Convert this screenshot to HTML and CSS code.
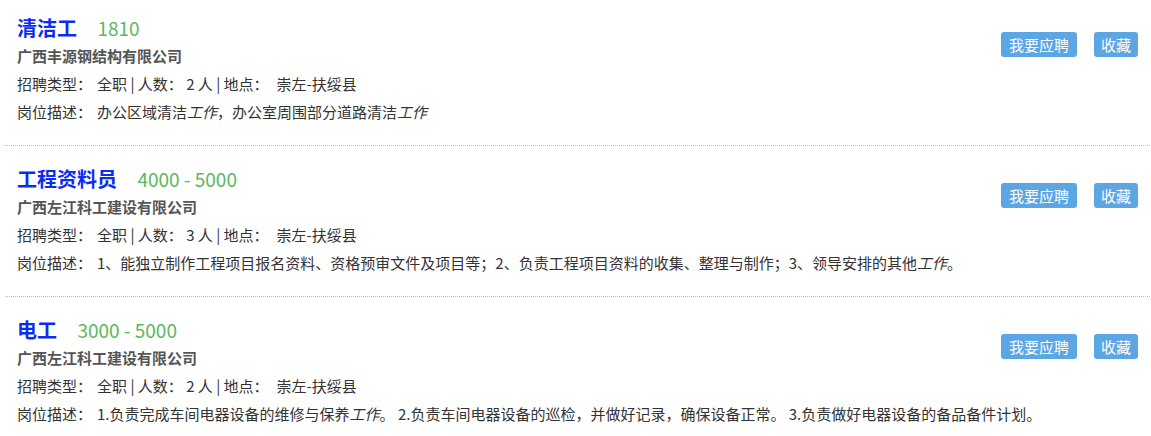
FILE: index.html
```html
<!DOCTYPE html>
<html lang="zh-CN">
<head>
  <meta charset="UTF-8" />
  <meta name="viewport" content="width=device-width, initial-scale=1.0"/>
  <title>职位列表</title>
  <link rel="stylesheet" href="styles.css">
</head>
<body>

  <ul class="job-list">
    <li class="job">
      <div class="job-info">
        <div class="job-title">
          <a href="#" class="job-name">清洁工</a>
          <span class="salary">1810</span>
        </div>
        <div class="company">广西丰源钢结构有限公司</div>
        <div class="meta"><span class="label">招聘类型：</span>全职 | 人数：&nbsp;2 人 | 地点：<span class="place">崇左-扶绥县</span></div>
        <div class="desc"><span class="label">岗位描述：</span>办公区域清洁<em>工作</em>，办公室周围部分道路清洁<em>工作</em></div>
      </div>
      <div class="actions">
        <a href="#" class="btn">我要应聘</a>
        <a href="#" class="btn">收藏</a>
      </div>
    </li>

    <li class="job">
      <div class="job-info">
        <div class="job-title">
          <a href="#" class="job-name">工程资料员</a>
          <span class="salary">4000 - 5000</span>
        </div>
        <div class="company">广西左江科工建设有限公司</div>
        <div class="meta"><span class="label">招聘类型：</span>全职 | 人数：&nbsp;3 人 | 地点：<span class="place">崇左-扶绥县</span></div>
        <div class="desc"><span class="label">岗位描述：</span>1、能独立制作工程项目报名资料、资格预审文件及项目等；2、负责工程项目资料的收集、整理与制作；3、领导安排的其他<em>工作</em>。</div>
      </div>
      <div class="actions">
        <a href="#" class="btn">我要应聘</a>
        <a href="#" class="btn">收藏</a>
      </div>
    </li>

    <li class="job">
      <div class="job-info">
        <div class="job-title">
          <a href="#" class="job-name">电工</a>
          <span class="salary">3000 - 5000</span>
        </div>
        <div class="company">广西左江科工建设有限公司</div>
        <div class="meta"><span class="label">招聘类型：</span>全职 | 人数：&nbsp;2 人 | 地点：<span class="place">崇左-扶绥县</span></div>
        <div class="desc"><span class="label">岗位描述：</span>1.负责完成车间电器设备的维修与保养<em>工作</em>。&nbsp;2.负责车间电器设备的巡检，并做好记录，确保设备正常。&nbsp;3.负责做好电器设备的备品备件计划。</div>
      </div>
      <div class="actions">
        <a href="#" class="btn">我要应聘</a>
        <a href="#" class="btn">收藏</a>
      </div>
    </li>
  </ul>

</body>
</html>
```

FILE: styles.css
```css
body {
  margin: 0;
  font-family: "Noto Sans CJK SC", "Noto Sans", sans-serif;
  font-size: 15px;
  color: #333;
  background: #fff;
}

.job-list {
  list-style: none;
  margin: 0 1px 0 5px;
  padding: 0;
}

.job {
  display: flex;
  justify-content: space-between;
  align-items: flex-start;
  padding: 19px 12px 19px 12px;
  border-bottom: 1px dotted #bbb;
}

.job:first-child {
  padding-top: 14px;
}

.job:last-child {
  border-bottom: none;
}

.job-info {
  flex: 1;
  min-width: 0;
}

.job-title {
  height: 28px;
  line-height: 28px;
  font-size: 20px;
  white-space: nowrap;
  overflow: hidden;
}

.job-name {
  font-weight: bold;
  color: #0a2cf5;
  text-decoration: none;
}

.salary {
  margin-left: 16px;
  font-size: 19px;
  color: #5cb85c;
}

.company,
.meta,
.desc {
  height: 28px;
  line-height: 28px;
  white-space: nowrap;
}

.company {
  font-weight: bold;
  color: #555;
}

.label {
  margin-right: 5px;
}

.place {
  margin-left: 8px;
}

.desc em {
  font-style: italic;
}

.actions {
  flex-shrink: 0;
  display: flex;
  gap: 17px;
  margin-top: 18px;
}

.btn {
  display: inline-block;
  height: 25px;
  padding: 0 8px;
  line-height: 25px;
  white-space: nowrap;
  background-color: #5ca6e3;
  color: #fff;
  font-size: 15px;
  border-radius: 3px;
  text-decoration: none;
}

.btn + .btn {
  padding: 0 7px;
}

.btn:hover {
  background-color: #4a94d1;
}
```
